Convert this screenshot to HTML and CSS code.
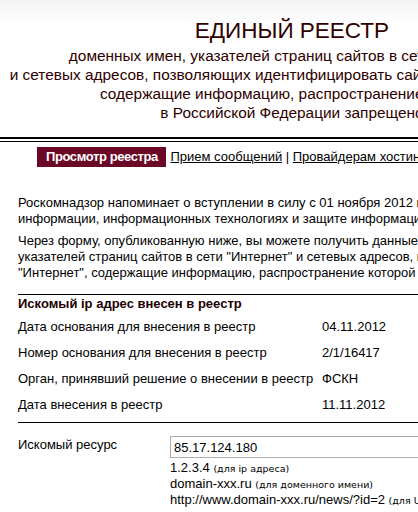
FILE: index.html
```html
<!DOCTYPE html>
<html lang="ru-RU">
<head>
    <meta charset="utf-8">
    <title>Единый реестр</title>
    <link rel="stylesheet" href="styles.css">
</head>
<body>
    <div class="page">
        <header class="head">
            <h1>ЕДИНЫЙ РЕЕСТР</h1>
            <p>доменных имен, указателей страниц сайтов в сети "Интернет"<br>
               и сетевых адресов, позволяющих идентифицировать сайты в сети "Интернет",<br>
               содержащие информацию, распространение которой<br>
               в Российской Федерации запрещено</p>
        </header>

        <div class="rule"></div>

        <nav class="menu">
            <span class="current">Просмотр реестра</span>
            <a href="#">Прием сообщений</a> | <a href="#">Провайдерам хостинга</a> | <a href="#">Операторам связи</a>
        </nav>

        <main class="content">
            <p>Роскомнадзор напоминает о вступлении в силу с 01 ноября 2012 г. Федерального закона "Об<br>
               информации, информационных технологиях и защите информации"</p>
            <p>Через форму, опубликованную ниже, вы можете получить данные о наличии доменных имен,<br>
               указателей страниц сайтов в сети "Интернет" и сетевых адресов, позволяющих идентифицировать сайты в сети<br>
               "Интернет", содержащие информацию, распространение которой в Российской Федерации запрещено.</p>

            <hr class="sep-top">

            <h3>Искомый ip адрес внесен в реестр</h3>
            <div class="result">
                <span>Дата основания для внесения в реестр</span><span>04.11.2012</span>
                <span>Номер основания для внесения в реестр</span><span>2/1/16417</span>
                <span>Орган, принявший решение о внесении в реестр</span><span>ФСКН</span>
                <span>Дата внесения в реестр</span><span>11.11.2012</span>
            </div>

            <hr class="sep-bottom">

            <form class="search">
                <label for="res">Искомый ресурс</label>
                <div>
                    <input id="res" type="text" value="85.17.124.180">
                    <div class="hints">
                        1.2.3.4 <small>(для ip адреса)</small><br>
                        domain-xxx.ru <small>(для доменного имени)</small><br>
                        http://www.domain-xxx.ru/news/?id=2 <small>(для URL)</small>
                    </div>
                </div>
            </form>
        </main>
    </div>
</body>
</html>
```

FILE: styles.css
```css
html { overflow: hidden }

body {
    margin: 0;
    font-family: "Liberation Sans", Arial, sans-serif;
    font-size: 13px;
    color: #000;
    background: #fff linear-gradient(#f2f2f2, #fff 26px) no-repeat;
}

.page { width: 900px }

.head {
    width: 584px;
    text-align: center;
    white-space: nowrap;
    color: #2e0000;
}

.head h1 {
    margin: 18px 0 0;
    font-size: 22.5px;
    line-height: 26px;
    font-weight: normal;
}

.head p {
    margin: 2px 0 0;
    font-size: 15.4px;
    line-height: 19px;
}

.rule {
    margin-top: 15px;
    height: 2px;
    border-top: 2px solid #000;
    border-bottom: 1px solid #000;
}

.menu {
    margin-top: 5px;
    padding-left: 37px;
    line-height: 20px;
}

.menu a { color: #000 }

.current {
    display: inline-block;
    padding: 0 8px 0 9px;
    margin-right: 1px;
    background-color: #6b0826;
    color: #fff;
    font-weight: bold;
    letter-spacing: -0.4px;
}

.content { padding: 28px 0 0 18px }

.content p {
    margin: 0 0 6px;
    line-height: 16px;
}

hr {
    border: none;
    border-top: 1px solid #000;
    margin: 0;
}

.sep-top { margin-top: 13px }

.sep-bottom { margin-top: 5px }

h3 {
    margin: 0;
    font-size: 13px;
    line-height: 18px;
    color: #200000;
}

.result {
    display: grid;
    grid-template-columns: 304px auto;
    grid-auto-rows: 26px;
    align-items: center;
}

.search {
    display: grid;
    grid-template-columns: 152px auto;
    padding-top: 13px;
}

.search label { padding-top: 1px }

.search input {
    display: block;
    width: 300px;
    height: 22px;
    box-sizing: border-box;
    margin: 0;
    padding: 1px 3px;
    border: 1px solid #abadb3;
    border-top-color: #a6a8ae;
    font: 13px "Liberation Sans", Arial, sans-serif;
}

.hints {
    margin-top: 2px;
    line-height: 15px;
}

.hints small {
    font-family: "DejaVu Sans", Verdana, sans-serif;
    font-size: 9.5px;
}
```
